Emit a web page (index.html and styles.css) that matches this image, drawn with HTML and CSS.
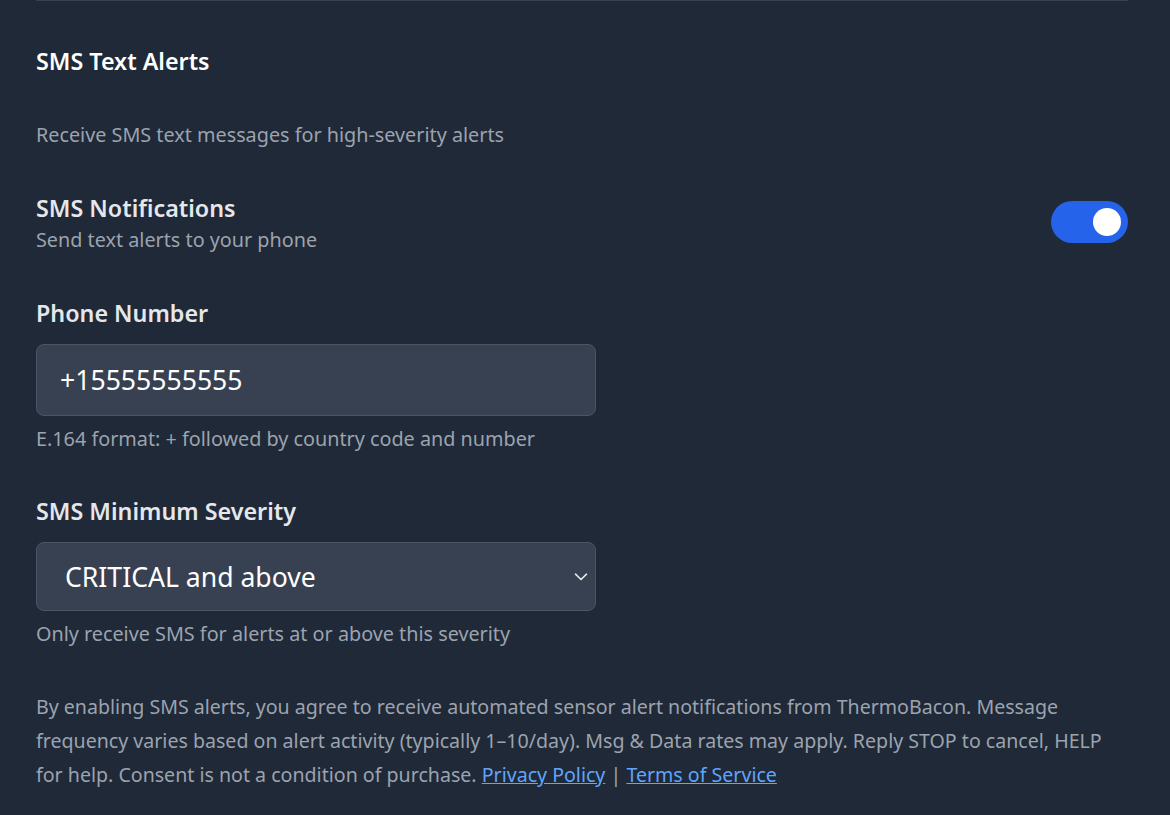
FILE: index.html
```html
<!DOCTYPE html>
<html lang="en">
<head>
<meta charset="utf-8">
<title>SMS Text Alerts</title>
<link rel="stylesheet" href="styles.css">
</head>
<body>
<div class="panel">
  <h2 class="title">SMS Text Alerts</h2>
  <p class="subtitle">Receive SMS text messages for high-severity alerts</p>

  <div class="toggle-row">
    <div class="toggle-text">
      <div class="label">SMS Notifications</div>
      <div class="hint">Send text alerts to your phone</div>
    </div>
    <button class="switch" type="button" aria-pressed="true"><span class="knob"></span></button>
  </div>

  <div class="field">
    <label class="label" for="phone">Phone Number</label>
    <input id="phone" class="control" type="text" value="+15555555555">
    <div class="hint help">E.164 format: + followed by country code and number</div>
  </div>

  <div class="field field-sev">
    <label class="label" for="sev">SMS Minimum Severity</label>
    <div class="select-wrap">
      <select id="sev" class="control select">
        <option>CRITICAL and above</option>
      </select>
      <svg class="chev" viewBox="0 0 14 8" width="14" height="8"><path d="M1.5 1.2 L7 6.5 L12.5 1.2" fill="none" stroke="#e5e7eb" stroke-width="1.6" stroke-linecap="round" stroke-linejoin="round"/></svg>
    </div>
    <div class="hint help">Only receive SMS for alerts at or above this severity</div>
  </div>

  <p class="consent">By enabling SMS alerts, you agree to receive automated sensor alert notifications from ThermoBacon. Message frequency varies based on alert activity (typically 1–10/day). Msg &amp; Data rates may apply. Reply STOP to cancel, HELP for help. Consent is not a condition of purchase. <a href="#">Privacy Policy</a> <span class="sep">|</span> <a href="#">Terms of Service</a></p>
</div>
</body>
</html>
```
FILE: styles.css
```css
html, body {
  margin: 0;
  padding: 0;
  background: #1f2937;
}
body {
  font-family: "Noto Sans", "Open Sans", sans-serif;
  color: #9ca3af;
}
.panel {
  margin: 0 42px 0 36px;
  border-top: 1px solid #374151;
  padding-top: 44px;
}
.title {
  margin: 0;
  font-size: 23.3px;
  line-height: 32px;
  font-weight: 600;
  color: #ffffff;
}
.subtitle {
  margin: 44px 0 0;
  font-size: 19.8px;
  line-height: 28px;
  color: #9ca3af;
}
.toggle-row {
  margin-top: 44px;
  display: flex;
  align-items: flex-start;
  justify-content: space-between;
}
.toggle-text {
  display: flex;
  flex-direction: column;
  gap: 3px;
}
.label {
  display: block;
  font-size: 23.3px;
  line-height: 30px;
  font-weight: 600;
  color: #e5e7eb;
}
.hint {
  font-size: 19.8px;
  line-height: 28px;
  color: #9ca3af;
}
.switch {
  margin-top: 8px;
  width: 77px;
  height: 42px;
  border: 0;
  border-radius: 21px;
  background: #2563eb;
  padding: 0 7px;
  display: flex;
  align-items: center;
  justify-content: flex-end;
  cursor: pointer;
}
.knob {
  width: 28px;
  height: 28px;
  border-radius: 50%;
  background: #ffffff;
}
.field {
  margin-top: 44px;
}
.field-sev {
  margin-top: 43px;
}
.control {
  display: block;
  box-sizing: border-box;
  width: 560px;
  margin-top: 16px;
  background: #374151;
  border: 1px solid #4b5563;
  border-radius: 8px;
  color: #ffffff;
  font-family: inherit;
  font-size: 26.6px;
  outline: none;
}
input.control {
  height: 72px;
  padding: 0 23px;
}
.select-wrap {
  position: relative;
  width: 560px;
  margin-top: 16px;
}
.select-wrap .control {
  margin-top: 0;
}
.select {
  height: 69px;
  padding: 0 28px;
  appearance: none;
  -webkit-appearance: none;
}
.chev {
  position: absolute;
  right: 8px;
  top: 31px;
  pointer-events: none;
}
.help {
  margin-top: 9px;
}
.consent {
  margin: 42px 0 0;
  font-size: 19.6px;
  line-height: 34px;
  color: #9ca3af;
}
.consent a {
  color: #60a5fa;
  text-decoration: underline;
}
.sep {
  color: #9ca3af;
}
```
